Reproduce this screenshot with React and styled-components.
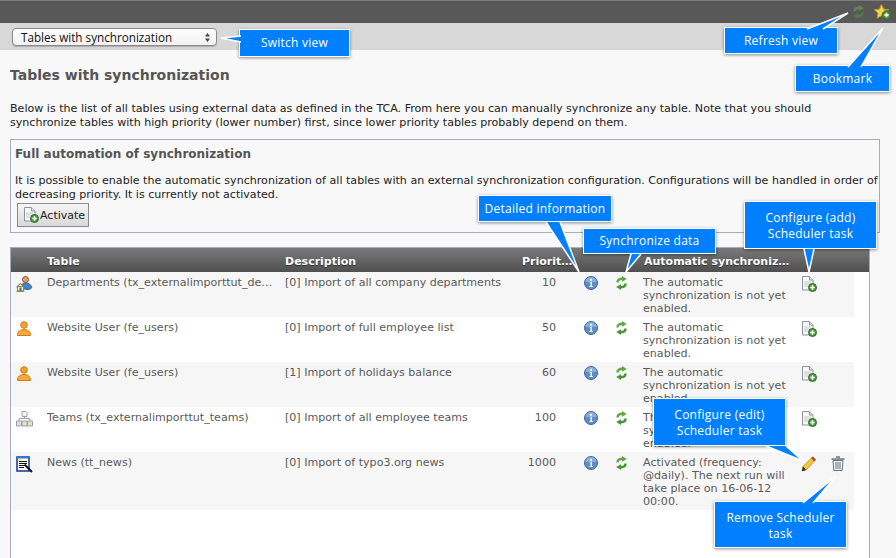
import styled, { createGlobalStyle } from 'styled-components';

const GlobalStyle = createGlobalStyle`
  html, body {
    margin: 0;
    height: 558px;
    overflow: hidden;
    background: #f8f8f8;
    font-family: "DejaVu Sans", Verdana, sans-serif;
    font-size: 11.08px;
  }
`;

const Page = styled.div`
  position: relative;
  width: 896px;
  height: 558px;
  overflow: hidden;
`;

const TopBar = styled.div`
  height: 22px;
  border-top: 1px solid #7c7c7c;
  background: #585858;
  display: flex;
  justify-content: flex-end;
  align-items: center;
  gap: 10px;
  padding-right: 5px;
`;

const ViewBar = styled.div`
  height: 27px;
  background: #d8d8d8;
  padding: 5px 0 0 12px;
  box-sizing: border-box;
`;

const SelectBox = styled.div`
  width: 205px;
  height: 18px;
  box-sizing: border-box;
  background: linear-gradient(#ffffff, #f1f1f1);
  border: 1px solid #8a8a8a;
  border-radius: 4px;
  box-shadow: 0 1px 1px rgba(0, 0, 0, 0.2);
  display: flex;
  align-items: center;
  justify-content: space-between;
  padding: 0 6px 0 8px;
  font-family: "Open Sans", sans-serif;
  font-size: 11.7px;
  color: #111;
`;

const Content = styled.div`
  padding: 17px 16px 0 10px;
`;

const Title = styled.h1`
  margin: 0 0 18px;
  font-size: 14px;
  line-height: 17px;
  font-weight: bold;
  color: #555;
`;

const Intro = styled.p`
  margin: 0 0 9px;
  line-height: 14px;
  color: #222;
  width: 860px;
`;

const AutomationBox = styled.div`
  width: 870px;
  height: 94px;
  box-sizing: border-box;
  border: 1px solid #a4adbb;
  padding: 7px 0 0 4px;
  margin-bottom: 14px;
`;

const BoxTitle = styled.h2`
  margin: 0 0 13px;
  font-size: 12px;
  line-height: 14px;
  font-weight: bold;
  color: #555;
`;

const BoxText = styled.p`
  margin: 0;
  line-height: 14px;
  color: #222;
`;

const ActivateButton = styled.button`
  display: flex;
  align-items: center;
  gap: 1px;
  margin: 1px 0 0 2px;
  height: 24px;
  width: 72px;
  padding: 0 0 0 5px;
  box-sizing: border-box;
  border: 1px solid #8b8b8b;
  background: linear-gradient(#f6f6f6, #d8d8d8);
  font-family: "DejaVu Sans", sans-serif;
  font-size: 11px;
  color: #222;
`;

const TablePanel = styled.div`
  width: 860px;
  height: 320px;
  box-sizing: border-box;
  background: #fff;
  border-left: 1px solid #a4adbb;
  border-right: 1px solid #a4adbb;
  border-top: 1px solid #a4adbb;
`;

const Columns = `
  display: grid;
  grid-template-columns: 36px 238px 226px 45px 27px 32px 28px 157px 30px 24px;
`;

const HeadRow = styled.div`
  ${Columns}
  height: 24px;
  align-items: center;
  background: linear-gradient(#7a7a7a, #4f4f4f);
  color: #fff;
  font-weight: bold;
  font-size: 11px;
  text-shadow: 0 1px 1px rgba(0, 0, 0, 0.5);
  padding-top: 2px;
  box-sizing: border-box;
`;

const HeadCell = styled.div`
  white-space: nowrap;
  grid-column: ${({ $span }) => ($span ? `span ${$span}` : 'auto')};
  padding-left: ${({ $indent }) => $indent || 0}px;
`;

const Row = styled.div`
  ${Columns}
  width: 843px;
  height: ${({ $tall }) => ($tall ? '58px' : '45px')};
  box-sizing: border-box;
  padding-top: 4px;
  background: ${({ $odd }) => ($odd ? '#f6f6f6' : '#ffffff')};
  color: #5a5a5a;
  line-height: 13px;
`;

const Cell = styled.div`
  white-space: ${({ $wrap }) => ($wrap ? 'normal' : 'nowrap')};
  text-align: ${({ $right }) => ($right ? 'right' : 'left')};
  overflow: hidden;
`;

const IconCell = styled.div`
  padding-left: ${({ $indent }) => $indent || 0}px;
`;

const Callout = styled.div`
  position: absolute;
  left: ${({ $x }) => $x}px;
  top: ${({ $y }) => $y}px;
  width: ${({ $w }) => $w}px;
  height: ${({ $h }) => $h}px;
  box-sizing: border-box;
  padding-top: ${({ $h }) => ($h > 40 ? 2 : 0)}px;
  background: #0080ff;
  border: 1.5px solid #fff;
  box-shadow: 0 1px 3px rgba(0, 0, 0, 0.45);
  color: #fff;
  font-family: "Open Sans", sans-serif;
  font-size: 12px;
  letter-spacing: 0.25px;
  line-height: 16px;
  text-align: center;
  display: flex;
  align-items: center;
  justify-content: center;
`;

const TailSvg = styled.svg`
  position: absolute;
  left: 0;
  top: 0;
  overflow: visible;
  pointer-events: none;
`;

const PageIcon = () => (
  <svg width="16" height="16" viewBox="0 0 16 16">
    <path d="M1.500 .5h7l3.500 3.500v10H1.500z" fill="#f7f7f7" stroke="#8d95a0" />
    <path d="M8.500 .5v3.500h3.500" fill="#dfe3e8" stroke="#8d95a0" />
    <path d="M3 6h7M3 8h7M3 10h4" stroke="#c8c8c8" />
    <circle cx="11.500" cy="11.500" r="4" fill="#4c9a3c" stroke="#2f6e27" />
    <path d="M9.300 11.500h4.400M11.500 9.300v4.400" stroke="#fff" strokeWidth="1.500" />
  </svg>
);

const InfoIcon = () => (
  <svg width="14" height="14" viewBox="0 0 14 14">
    <circle cx="7" cy="7" r="6.500" fill="#5d8dc4" stroke="#3d679c" />
    <path d="M1.500 6a5.500 5 0 0 1 11 0z" fill="#9dbde0" opacity=".7" />
    <circle cx="7" cy="3.800" r="1.100" fill="#fff" />
    <path d="M5.800 6h2v4h1v1H5.500v-1h1V7h-.7z" fill="#fff" />
  </svg>
);

const SyncIcon = ({ dim }) => (
  <svg width="11" height="14" viewBox="0 0 11 14" opacity={dim ? 0.65 : 1}>
    <path d="M1.500 6.500C1.500 4 3.500 2.800 6 2.800" fill="none" stroke="#62a648" strokeWidth="2.400" />
    <path d="M6 0l4.800 2.900L6 5.800z" fill="#62a648" />
    <path d="M9.500 7.500C9.500 10 7.500 11.200 5 11.200" fill="none" stroke="#4a9436" strokeWidth="2.400" />
    <path d="M5 14L.2 11.100 5 8.200z" fill="#4a9436" />
  </svg>
);

const StarIcon = () => (
  <svg width="17" height="16" viewBox="0 0 17 16">
    <path d="M7.500 .5l2.200 4.700 5 .6-3.700 3.400 1 5-4.500-2.500-4.500 2.500 1-5L.5 5.800l5-.6z" fill="#f6d34a" stroke="#c79a1c" />
    <circle cx="12.500" cy="11" r="4.300" fill="#4c8a3c" stroke="#2f6e27" />
    <path d="M10.300 11h4.400M12.500 8.800v4.400" stroke="#fff" strokeWidth="1.500" />
  </svg>
);

const UserIcon = () => (
  <svg width="16" height="16" viewBox="0 0 16 16">
    <circle cx="8" cy="4" r="3.300" fill="#f5a030" stroke="#d47a10" />
    <path d="M1.500 14.500c0-4 2.500-6 6.500-6s6.500 2 6.500 6z" fill="#f9a83a" stroke="#d47a10" />
  </svg>
);

const DepartmentIcon = () => (
  <svg width="17" height="16" viewBox="0 0 17 16">
    <circle cx="9.500" cy="3.500" r="3" fill="#e0a060" stroke="#8c5020" />
    <path d="M5 12c0-3.500 1.500-5 4.500-5s5 1.500 6 3.500-2 3-4.500 3z" fill="#3f83d0" stroke="#2a5f9c" />
    <path d="M.5 11l4-3.500 4 3.500" fill="#f4f0e0" stroke="#6a5a40" />
    <path d="M1.500 10.500v4.500h6v-4.500z" fill="#f4f0e0" stroke="#8a7a60" />
    <path d="M3.500 11.500h2V15h-2z" fill="#6a5a40" />
    <path d="M.5 15.300h8" stroke="#4c9a3c" />
  </svg>
);

const TeamIcon = () => (
  <svg width="17" height="16" viewBox="0 0 17 16">
    <path d="M6 .5h4l1 1v4H6z" fill="#f4f4f4" stroke="#a0a0a0" />
    <path d="M8.500 5.500v2M3 10V7.500h11V10" fill="none" stroke="#a0a0a0" />
    <path d="M.5 10h5v5h-5z" fill="#cfe0f2" stroke="#a0a0a0" />
    <path d="M6 10h5v5H6z" fill="#f6d8c8" stroke="#a0a0a0" />
    <path d="M11.500 10h5v5h-5z" fill="#d2eccb" stroke="#a0a0a0" />
  </svg>
);

const NewsIcon = () => (
  <svg width="17" height="17" viewBox="0 0 17 17">
    <path d="M1 1h12v14H1z" fill="#fff" stroke="#0a3a8a" strokeWidth="1.500" />
    <path d="M1 .5h12v2H1z" fill="#2a7adf" />
    <path d="M3 5.500h8M3 7.500h8M3 9.500h6M3 11.500h5" stroke="#111" />
    <path d="M2.500 3h2v2h-2z" fill="#f6e04a" />
    <path d="M8.500 8.500l7.500 7.500" stroke="#111" strokeWidth="2" />
  </svg>
);

const PencilIcon = () => (
  <svg width="15" height="16" viewBox="0 0 15 16">
    <path d="M1 15l1-4.500L10.500 2l3 3L5 14z" fill="#f6c838" stroke="#a87c10" strokeWidth=".7" />
    <path d="M10.500 2l1.200-1.200 3 3L13.500 5z" fill="#d8402c" stroke="#9c2a1c" strokeWidth=".7" />
    <path d="M1 15l1-4.500 3 3.500z" fill="#222" />
  </svg>
);

const TrashIcon = () => (
  <svg width="14" height="15" viewBox="0 0 14 15">
    <path d="M5 1h4M.5 3h13" stroke="#6a7480" strokeWidth="1.500" />
    <path d="M2 4.500h10l-.8 10H2.800z" fill="#eef0f2" stroke="#6a7480" />
    <path d="M5 6v7M7 6v7M9 6v7" stroke="#6a7480" />
  </svg>
);

const SelectArrows = () => (
  <svg width="5" height="9" viewBox="0 0 5 9">
    <path d="M2.500 0L5 3.500H0zM2.500 9L0 5.500h5z" fill="#444" />
  </svg>
);

const rows = [
  { icon: <DepartmentIcon />, table: 'Departments (tx_externalimporttut_de…', desc: '[0] Import of all company departments', priority: 10, sync: 'The automatic synchronization is not yet enabled.', odd: true },
  { icon: <UserIcon />, table: 'Website User (fe_users)', desc: '[0] Import of full employee list', priority: 50, sync: 'The automatic synchronization is not yet enabled.' },
  { icon: <UserIcon />, table: 'Website User (fe_users)', desc: '[1] Import of holidays balance', priority: 60, sync: 'The automatic synchronization is not yet enabled.', odd: true },
  { icon: <TeamIcon />, table: 'Teams (tx_externalimporttut_teams)', desc: '[0] Import of all employee teams', priority: 100, sync: 'The automatic synchronization is not yet enabled.' },
  { icon: <NewsIcon />, table: 'News (tt_news)', desc: '[0] Import of typo3.org news', priority: 1000, sync: 'Activated (frequency: @daily). The next run will take place on 16-06-12 00:00.', odd: true, tall: true, active: true },
];

// x, y, w, h: outer box. tail: points relative to the box
const callouts = [
  { x: 239, y: 29, w: 111, h: 28, text: 'Switch view', tail: '1,6 -19,8 1,12' },
  { x: 724, y: 27, w: 114, h: 27, text: 'Refresh view', tail: '82,1 123,-15 98,1' },
  { x: 795, y: 65, w: 95, h: 27, text: 'Bookmark', tail: '52,1 87,-38 65,1' },
  { x: 478, y: 195, w: 134, h: 27, text: 'Detailed information', tail: '67,26 100,76 81,26' },
  { x: 583, y: 228, w: 133, h: 26, text: 'Synchronize data', tail: '47,25 42,43 57,25' },
  { x: 744, y: 201, w: 133, h: 48, text: <>Configure (add)<br />Scheduler task</>, tail: '59,47 64,70 69,47' },
  { x: 653, y: 398, w: 133, h: 48, text: <>Configure (edit)<br />Scheduler task</>, tail: '112,47 149,62 132,47' },
  { x: 714, y: 501, w: 133, h: 47, text: <>Remove Scheduler<br />task</>, tail: '88,1 121,-26 98,1' },
];

function App() {
  return (
    <Page>
      <GlobalStyle />
      <TopBar>
        <SyncIcon dim />
        <StarIcon />
      </TopBar>
      <ViewBar>
        <SelectBox>
          Tables with synchronization
          <SelectArrows />
        </SelectBox>
      </ViewBar>
      <Content>
        <Title>Tables with synchronization</Title>
        <Intro>
          Below is the list of all tables using external data as defined in the TCA. From here you can manually synchronize any table. Note that you should synchronize tables with high priority (lower number) first, since lower priority tables probably depend on them.
        </Intro>
        <AutomationBox>
          <BoxTitle>Full automation of synchronization</BoxTitle>
          <BoxText>
            It is possible to enable the automatic synchronization of all tables with an external synchronization configuration. Configurations will be handled in order of decreasing priority. It is currently not activated.
          </BoxText>
          <ActivateButton>
            <PageIcon />
            Activate
          </ActivateButton>
        </AutomationBox>
        <TablePanel>
          <HeadRow>
            <span />
            <HeadCell>Table</HeadCell>
            <HeadCell>Description</HeadCell>
            <HeadCell $indent={11}>Priorit…</HeadCell>
            <span />
            <span />
            <span />
            <HeadCell $span={3} $indent={1}>Automatic synchroniz…</HeadCell>
          </HeadRow>
          {rows.map((row) => (
            <Row key={row.desc} $odd={row.odd} $tall={row.tall}>
              <IconCell $indent={5}>{row.icon}</IconCell>
              <Cell>{row.table}</Cell>
              <Cell>{row.desc}</Cell>
              <Cell $right>{row.priority}</Cell>
              <span />
              <IconCell $indent={1}><InfoIcon /></IconCell>
              <IconCell $indent={1}><SyncIcon /></IconCell>
              <Cell $wrap>{row.sync}</Cell>
              <IconCell $indent={1}>{row.active ? <PencilIcon /> : <PageIcon />}</IconCell>
              <IconCell $indent={1}>{row.active && <TrashIcon />}</IconCell>
            </Row>
          ))}
        </TablePanel>
      </Content>
      {callouts.map((c) => (
        <Callout key={c.x} $x={c.x} $y={c.y} $w={c.w} $h={c.h}>
          {c.text}
          <TailSvg width={c.w} height={c.h}>
            <polyline points={c.tail} fill="#0080ff" stroke="#fff" strokeWidth="1.5" />
          </TailSvg>
        </Callout>
      ))}
    </Page>
  );
}

export default App;
